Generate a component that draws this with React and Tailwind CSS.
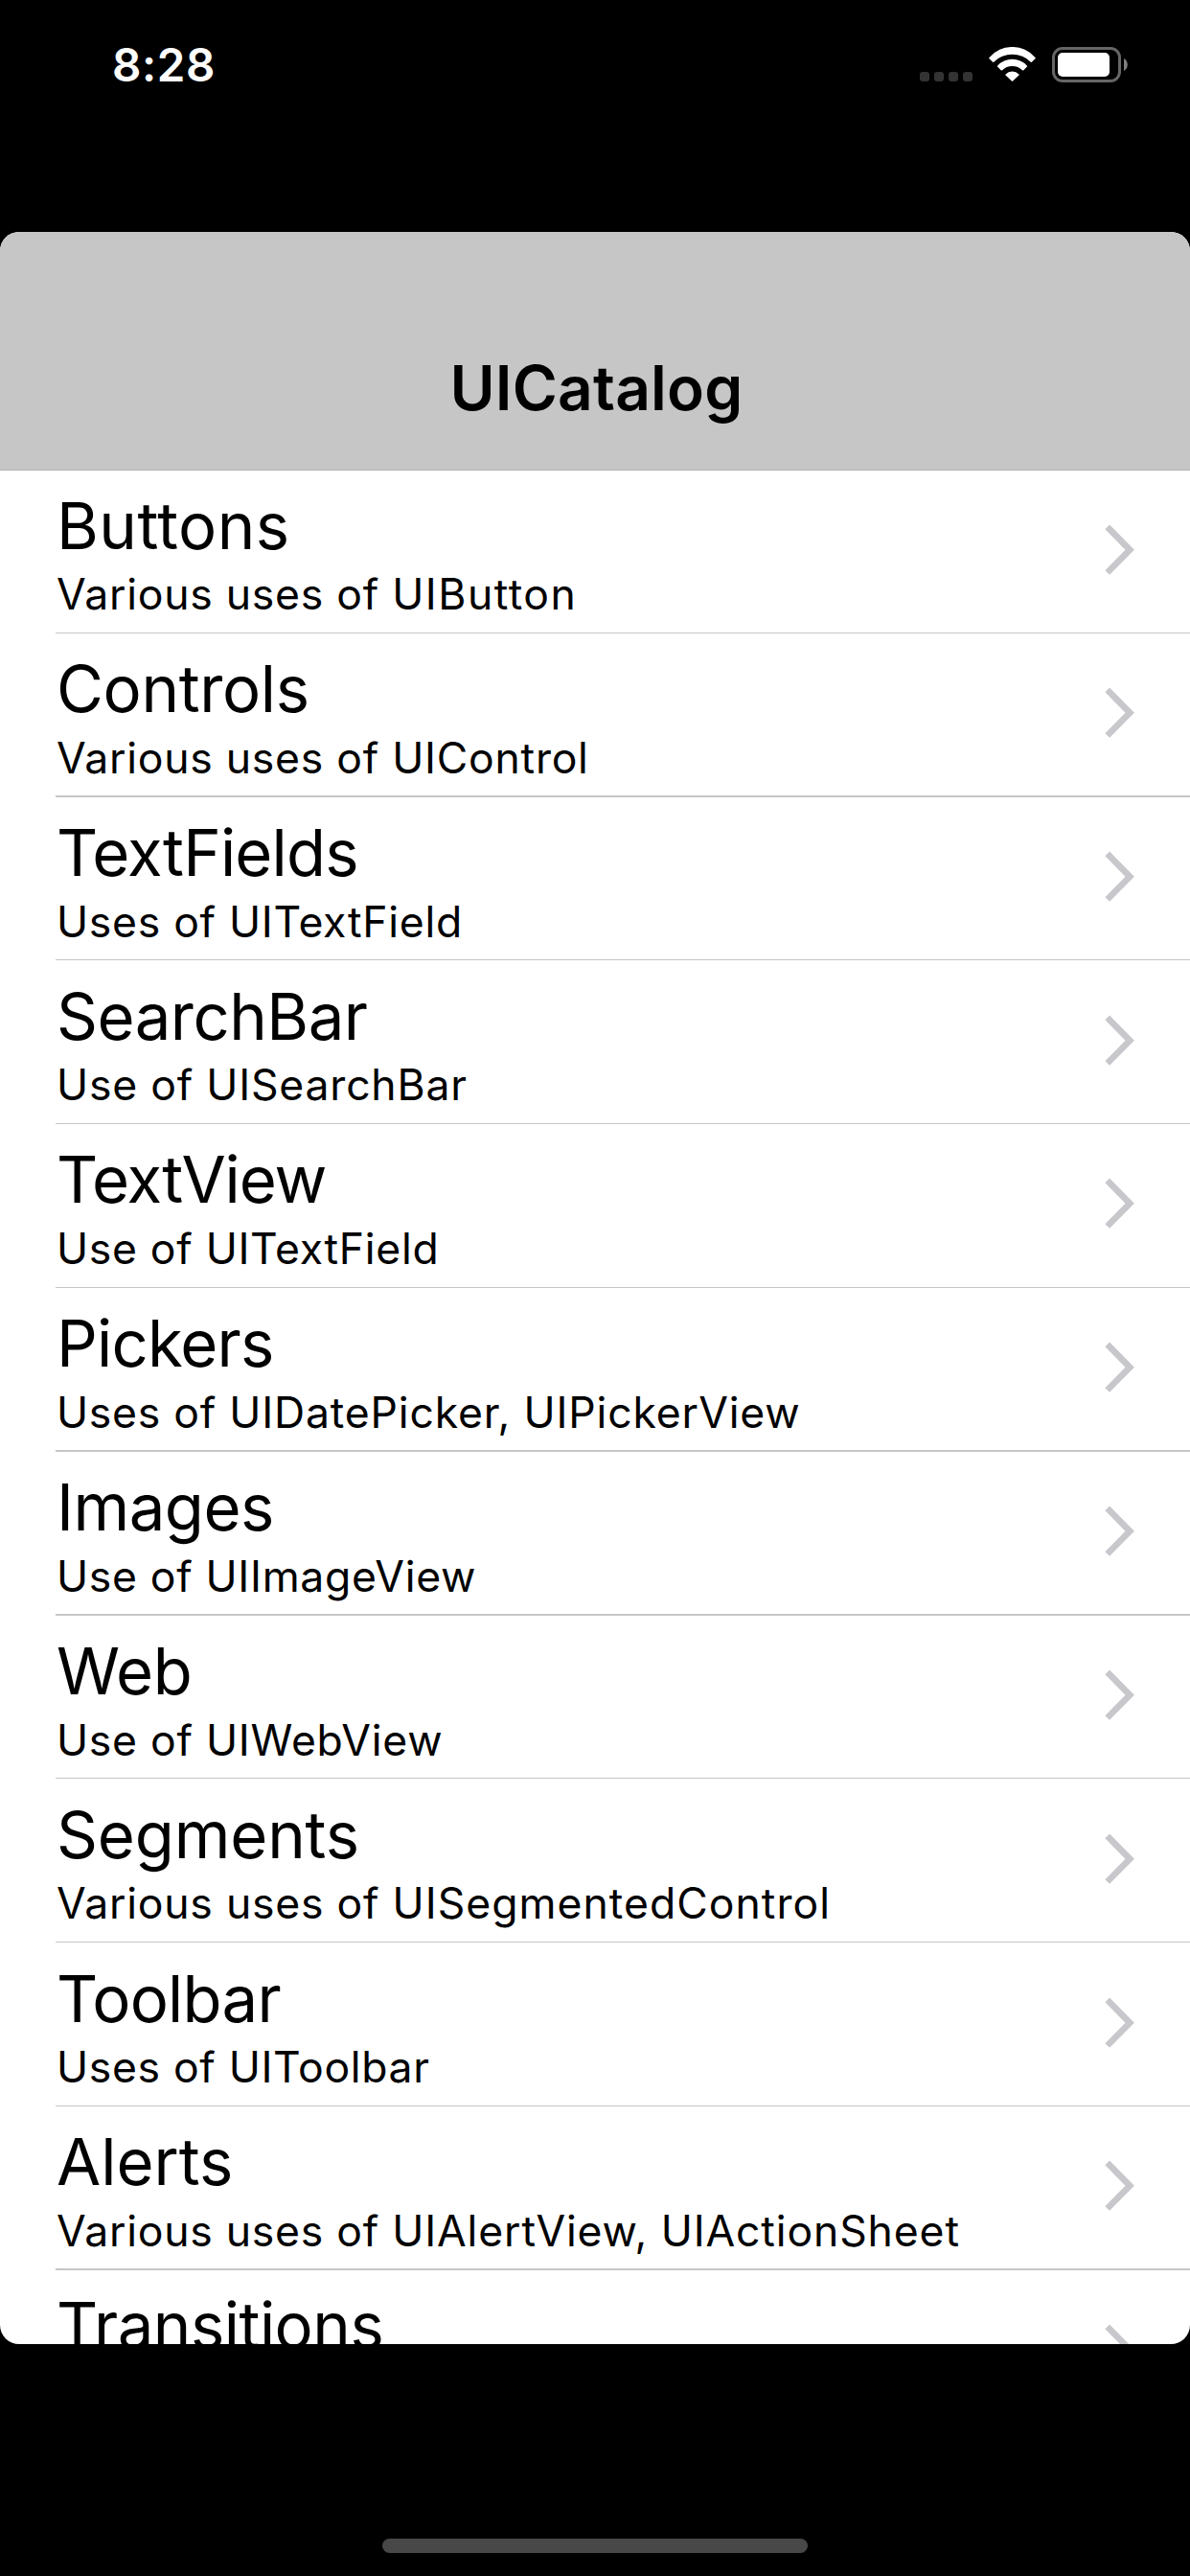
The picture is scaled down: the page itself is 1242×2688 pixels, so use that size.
import React from "react";

// t / u / s: letter spacing of the title, of the subtitle's lead words and of its class names
// pad: top padding, gap: space between the two lines, h: row height, line: separator thickness
const rows = [
  { title: "Buttons", lead: "Various uses of ", name: "UIButton", t: 0.5, u: 0.76, s: 1.5, pad: 18, gap: 3, h: 170, line: 1 },
  { title: "Controls", lead: "Various uses of ", name: "UIControl", t: -0.35, u: 0.76, s: 0.76, pad: 18, gap: 4, h: 171, line: 2 },
  { title: "TextFields", lead: "Uses of ", name: "UITextField", t: -0.8, u: 0.72, s: 0.72, pad: 18, gap: 4, h: 170, line: 1 },
  { title: "SearchBar", lead: "Use of ", name: "UISearchBar", t: -0.5, u: 0.8, s: 0.8, pad: 19, gap: 3, h: 171, line: 1 },
  { title: "TextView", lead: "Use of ", name: "UITextField", t: -1.07, u: 0.7, s: 0.7, pad: 18, gap: 4, h: 171, line: 1 },
  { title: "Pickers", lead: "Uses of ", name: "UIDatePicker, UIPickerView", t: -0.8, u: 0.76, s: 0.84, pad: 18, gap: 4, h: 171, line: 2 },
  { title: "Images", lead: "Use of ", name: "UIImageView", t: -0.5, u: 0.69, s: 0.69, pad: 18, gap: 4, h: 171, line: 2 },
  { title: "Web", lead: "Use of ", name: "UIWebView", t: -0.5, u: 0.75, s: 0.75, pad: 18, gap: 4, h: 170, line: 1 },
  { title: "Segments", lead: "Various uses of ", name: "UISegmentedControl", t: -0.15, u: 0.78, s: 1.03, pad: 19, gap: 3, h: 171, line: 1 },
  { title: "Toolbar", lead: "Uses of ", name: "UIToolbar", t: -0.75, u: 0.68, s: 0.68, pad: 19, gap: 3, h: 171, line: 1 },
  { title: "Alerts", lead: "Various uses of ", name: "UIAlertView, UIActionSheet", t: 0, u: 0.76, s: 0.87, pad: 18, gap: 4, h: 171, line: 2 },
  { title: "Transitions", lead: "", name: "", t: -0.5, u: 0, s: 0, pad: 18, gap: 4, h: 171, line: 1 },
];

function Row({ row }) {
  return (
    <li className="flex shrink-0 pl-[58px]" style={{ height: row.h }}>
      <div
        className="flex flex-1 items-start justify-between border-[#c6c6c8] pr-[57px]"
        style={{ borderBottomWidth: row.line, paddingTop: row.pad }}
      >
        <div className="pl-px whitespace-pre">
          <div className="text-[67px] leading-[80px]" style={{ letterSpacing: row.t }}>{row.title}</div>
          <div className="text-[44.5px] leading-[56px]" style={{ letterSpacing: row.u, marginTop: row.gap }}>
            {row.lead}
            <span style={{ letterSpacing: row.s }}>{row.name}</span>
          </div>
        </div>
        <svg className="mt-[38px] h-[54px] w-8" viewBox="0 0 32 54" fill="#c7c7cc">
          <path d="M5.1.6 30.9 26.7 5.1 52.8.4 48.2 21.5 26.7.4 5.2Z" />
        </svg>
      </div>
    </li>
  );
}

function StatusBar() {
  return (
    <div className="flex h-[242px] shrink-0 items-start justify-between pr-[64px] pl-[117px] text-white">
      <div className="mt-10 text-[47.5px] leading-[56px] font-semibold tracking-[0.6px]">8:28</div>
      <div className="mt-[49px] flex items-start">
        <div className="mt-[26px] flex gap-[5px]">
          <span className="size-[10px] rounded-[3px] bg-[#333]" />
          <span className="size-[10px] rounded-[3px] bg-[#333]" />
          <span className="size-[10px] rounded-[3px] bg-[#333]" />
          <span className="size-[10px] rounded-[3px] bg-[#333]" />
        </div>
        <svg className="ml-[17px] h-[36px] w-[49px]" viewBox="0 0 49 36" fill="#fff">
          <path d="M.5 12.2Q-.2 11.5.6 10.9A31.6 31.6 0 0 1 48.4 10.9Q49.2 11.5 48.5 12.2L44.8 15.7Q44.3 16.1 43.8 15.7A27.3 27.3 0 0 0 5.2 15.7Q4.7 16.1 4.2 15.7Z" />
          <path d="M9 20.5Q8.5 19.9 9.2 19.4A21 21 0 0 1 39.8 19.4Q40.5 19.9 40 20.5L36.3 24.3Q35.8 24.8 35.2 24.4A15.5 15.5 0 0 0 13.8 24.4Q13.2 24.8 12.7 24.3Z" />
          <path d="M17.5 29.6Q17 29 17.6 28.5A9.5 9.5 0 0 1 31.4 28.5Q32 29 31.5 29.6L25.1 35.5Q24.5 36 23.9 35.5Z" />
        </svg>
        <div className="ml-[17px] h-[37px] w-[72px] rounded-[11px] border-[3px] border-[#666] p-[3px]">
          <div className="h-[25px] w-[54px] rounded-[5px] bg-white" />
        </div>
        <svg className="mt-3 ml-[3px] h-[13px] w-[5px]" viewBox="0 0 5 13" fill="#808080">
          <path d="M0 0A7.5 7.5 0 0 1 0 13Z" />
        </svg>
      </div>
    </div>
  );
}

export default function App() {
  return (
    <div className="flex h-[2688px] w-[1242px] flex-col overflow-hidden bg-black font-[Inter,sans-serif] text-black">
      <StatusBar />
      <main className="flex h-[2204px] shrink-0 flex-col overflow-hidden rounded-[20px] bg-white">
        <header className="h-[249px] shrink-0 border-b border-[#b2b2b2] bg-[#c6c6c6] pt-[123px] pl-[3px] text-center">
          <h1 className="text-[64px] leading-[80px] font-semibold tracking-[0.2px]">UICatalog</h1>
        </header>
        <ul className="flex flex-col">
          {rows.map((row) => (
            <Row key={row.title} row={row} />
          ))}
        </ul>
      </main>
      <div className="mt-[203px] h-[15px] w-[444px] self-center rounded-full bg-[#484848]" />
    </div>
  );
}
